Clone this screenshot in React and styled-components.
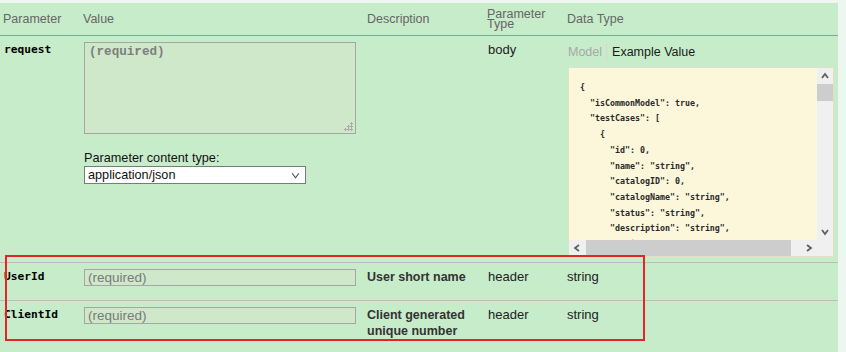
import styled, { createGlobalStyle } from "styled-components";

const GlobalStyle = createGlobalStyle`
  html, body {
    margin: 0;
    padding: 0;
    background: #edf6ef;
  }
  body {
    font-family: "Liberation Sans", Arial, sans-serif;
    font-size: 13px;
    color: #222;
  }
  * {
    box-sizing: border-box;
  }
`;

const Panel = styled.div`
  position: relative;
  margin-top: 3px;
  width: 838px;
  height: 349px;
  background: #c7ecca;
  overflow: hidden;
`;

const COLS = "80px 284px 120px 80px 1fr";

const HeadRow = styled.div`
  display: grid;
  grid-template-columns: ${COLS};
  height: 33px;
  border-bottom: 1px solid #9a9a9a;
  align-items: center;
`;

const HeadCell = styled.div`
  padding: 0 3px;
  color: #666;
  font-size: 12.5px;
  line-height: ${(p) => (p.$tight ? "10.5px" : "14px")};
`;

const Row = styled.div`
  display: grid;
  grid-template-columns: ${COLS};
  align-items: start;
  height: ${(p) => p.$h}px;
  border-bottom: ${(p) => (p.$last ? "none" : "1px solid #bcbcbc")};
  padding-top: 6px;
`;

const Cell = styled.div`
  padding: 0 3px;
  margin-top: 1px;
  line-height: 14px;
  color: #222;
`;

const ParamName = styled(Cell)`
  padding-left: 4px;
  margin-top: 1px;
  font-family: "DejaVu Sans Mono", "Liberation Mono", monospace;
  font-weight: bold;
  font-size: 11.2px;
  color: #000;
`;

const ValueCell = styled.div`
  padding-left: 4px;
`;

const AreaWrap = styled.div`
  position: relative;
  width: 272px;
  height: 92px;
`;

const BodyArea = styled.textarea`
  display: block;
  width: 100%;
  height: 100%;
  margin: 0;
  resize: none;
  border: 1px solid #a6a6a6;
  background: #cfe8c9;
  padding: 2px 4px;
  font-family: "Liberation Mono", monospace;
  font-size: 12.6px;
  font-weight: bold;
  color: #777;
  outline: none;
  &::placeholder {
    color: #7e7e7e;
  }
`;

const Grip = styled.span`
  position: absolute;
  right: 3px;
  bottom: 3px;
  width: 9px;
  height: 9px;
  background:
    radial-gradient(circle, #ababab 60%, transparent 61%) 6px 0 / 3px 3px no-repeat,
    radial-gradient(circle, #ababab 60%, transparent 61%) 3px 3px / 3px 3px no-repeat,
    radial-gradient(circle, #ababab 60%, transparent 61%) 6px 3px / 3px 3px no-repeat,
    radial-gradient(circle, #ababab 60%, transparent 61%) 0 6px / 3px 3px no-repeat,
    radial-gradient(circle, #ababab 60%, transparent 61%) 3px 6px / 3px 3px no-repeat,
    radial-gradient(circle, #ababab 60%, transparent 61%) 6px 6px / 3px 3px no-repeat;
`;

const ContentLabel = styled.div`
  margin-top: 17px;
  font-size: 12.7px;
  line-height: 14px;
  color: #111;
`;

const SelectBox = styled.div`
  display: flex;
  align-items: center;
  justify-content: space-between;
  width: 222px;
  height: 18px;
  margin-top: 1px;
  padding: 0 5px 0 3px;
  background: #fff;
  border: 1px solid #7a7a7a;
  font-size: 12.7px;
  color: #111;
`;

const TextInput = styled.input`
  display: block;
  width: 272px;
  height: 17px;
  margin: 0;
  padding: 0 3px;
  border: 1px solid #a6a6a6;
  background: #cfe8c9;
  font-family: "Liberation Sans", Arial, sans-serif;
  font-size: 13.5px;
  outline: none;
  &::placeholder {
    color: #7a7a7a;
  }
`;

const Desc = styled(Cell)`
  font-weight: bold;
  font-size: 12.5px;
  line-height: 16px;
  color: #333;
  margin-top: 0;
`;

const TypeCell = styled(Cell)`
  padding-left: 4px;
`;

const Toggle = styled.div`
  display: flex;
  align-items: center;
  height: 20px;
  margin-top: -1px;
  font-size: 12.5px;
`;

const ToggleItem = styled.span`
  color: ${(p) => (p.$active ? "#1a1a1a" : "#a8a8a8")};
  padding: ${(p) => (p.$active ? "0 0 0 5px" : "0 4px 0 1px")};
  border-right: ${(p) => (p.$active ? "none" : "1px solid #d4d4d4")};
  line-height: 16px;
`;

const CodeBox = styled.div`
  display: grid;
  grid-template-columns: 248px 16px;
  grid-template-rows: 172px 16px;
  width: 266px;
  height: 190px;
  margin-top: 5px;
  margin-left: 1px;
  background: #fcf6db;
  border: 1px solid #e6dfc3;
`;

const Code = styled.pre`
  margin: 0;
  padding: 12px 0 0 11px;
  overflow: hidden;
  font-family: "DejaVu Sans Mono", "Liberation Mono", monospace;
  font-size: 8.3px;
  line-height: 15.7px;
  font-weight: bold;
  color: #2a2a2a;
  white-space: pre;
`;

const VBar = styled.div`
  display: flex;
  flex-direction: column;
  align-items: stretch;
  background: #f0f0f0;
`;

const HBar = styled.div`
  display: flex;
  align-items: stretch;
  background: #f0f0f0;
`;

const Arrow = styled.div`
  flex: 0 0 16px;
  display: flex;
  align-items: center;
  justify-content: center;
`;

const VThumb = styled.div`
  height: 17px;
  background: #cdcdcd;
`;

const HThumb = styled.div`
  width: 205px;
  margin-left: 1px;
  background: #cdcdcd;
`;

const Spacer = styled.div`
  flex: 1;
`;

const Corner = styled.div`
  background: #f0f0f0;
`;

const Highlight = styled.div`
  position: absolute;
  left: 5px;
  top: 252px;
  width: 640px;
  height: 86px;
  border: 2px solid #e8222c;
  pointer-events: none;
`;

const Chevron = ({ dir, size = 8, color = "#606060", width = 1.8 }) => {
  const pts = {
    up: "1,6 4,2 7,6",
    down: "1,2 4,6 7,2",
    left: "6,1 2,4 6,7",
    right: "2,1 6,4 2,7",
  }[dir];
  return (
    <svg width={size} height={size} viewBox="0 0 8 8">
      <polyline points={pts} fill="none" stroke={color} strokeWidth={width} />
    </svg>
  );
};

const example = `{
  "isCommonModel": true,
  "testCases": [
    {
      "id": 0,
      "name": "string",
      "catalogID": 0,
      "catalogName": "string",
      "status": "string",
      "description": "string",
      "projectID": 0
    }
  ]
}`;

export default function App() {
  return (
    <>
      <GlobalStyle />
      <Panel>
        <HeadRow>
          <HeadCell>Parameter</HeadCell>
          <HeadCell>Value</HeadCell>
          <HeadCell>Description</HeadCell>
          <HeadCell $tight>
            Parameter
            <br />
            Type
          </HeadCell>
          <HeadCell>Data Type</HeadCell>
        </HeadRow>

        <Row $h={227}>
          <ParamName>request</ParamName>
          <ValueCell>
            <AreaWrap>
              <BodyArea placeholder="(required)" />
              <Grip />
            </AreaWrap>
            <ContentLabel>Parameter content type:</ContentLabel>
            <SelectBox>
              <span>application/json</span>
              <Chevron dir="down" size={9} color="#555" width={1} />
            </SelectBox>
          </ValueCell>
          <Desc />
          <TypeCell>body</TypeCell>
          <Cell>
            <Toggle>
              <ToggleItem>Model</ToggleItem>
              <ToggleItem $active>Example Value</ToggleItem>
            </Toggle>
            <CodeBox>
              <Code>{example}</Code>
              <VBar>
                <Arrow>
                  <Chevron dir="up" />
                </Arrow>
                <VThumb />
                <Spacer />
                <Arrow>
                  <Chevron dir="down" />
                </Arrow>
              </VBar>
              <HBar>
                <Arrow>
                  <Chevron dir="left" />
                </Arrow>
                <HThumb />
                <Spacer />
                <Arrow>
                  <Chevron dir="right" />
                </Arrow>
              </HBar>
              <Corner />
            </CodeBox>
          </Cell>
        </Row>

        <Row $h={38}>
          <ParamName>UserId</ParamName>
          <ValueCell>
            <TextInput placeholder="(required)" />
          </ValueCell>
          <Desc>User short name</Desc>
          <TypeCell>header</TypeCell>
          <Cell>string</Cell>
        </Row>

        <Row $h={52} $last>
          <ParamName>ClientId</ParamName>
          <ValueCell>
            <TextInput placeholder="(required)" />
          </ValueCell>
          <Desc>
            Client generated
            <br />
            unique number
          </Desc>
          <TypeCell>header</TypeCell>
          <Cell>string</Cell>
        </Row>

        <Highlight />
      </Panel>
    </>
  );
}
